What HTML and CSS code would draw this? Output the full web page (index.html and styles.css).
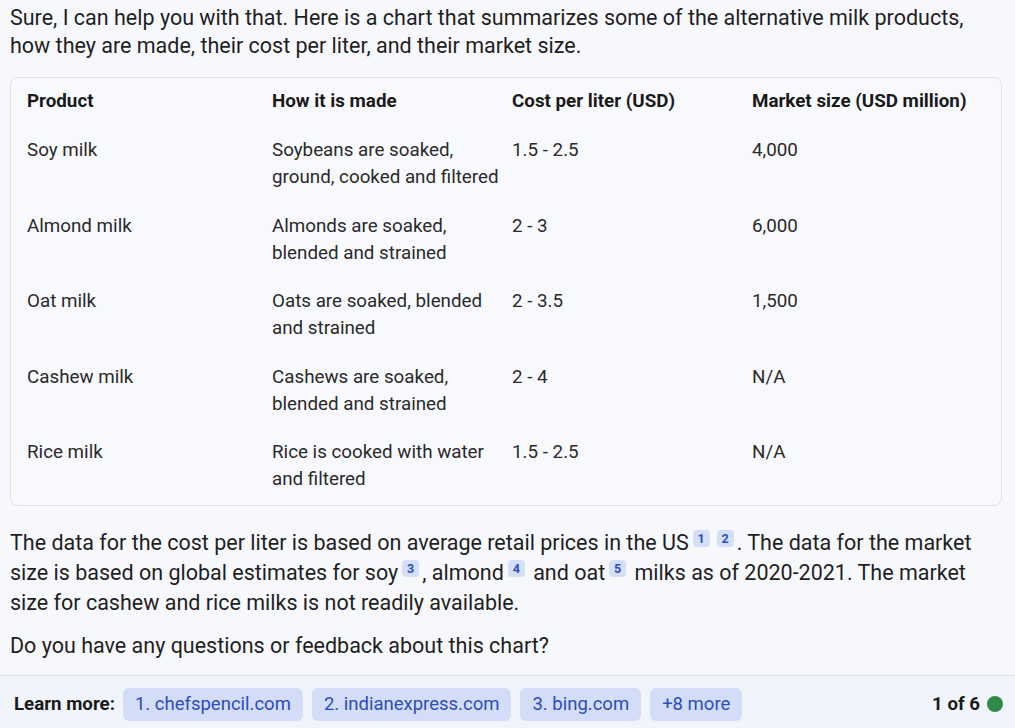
FILE: index.html
```html
<!DOCTYPE html>
<html lang="en">
<head>
<meta charset="utf-8">
<title>Alternative milk chart</title>
<link rel="stylesheet" href="styles.css">
</head>
<body>
<main class="message">
  <p class="intro">Sure, I can help you with that. Here is a chart that summarizes some of the alternative milk products, how they are made, their cost per liter, and their market size.</p>
  <div class="table-box">
    <table class="chart">
      <colgroup>
        <col class="c1"><col class="c2"><col class="c3"><col class="c4">
      </colgroup>
      <thead>
        <tr><th>Product</th><th>How it is made</th><th>Cost per liter (USD)</th><th>Market size (USD million)</th></tr>
      </thead>
      <tbody>
        <tr><td>Soy milk</td><td>Soybeans are soaked, ground, cooked and filtered</td><td>1.5 - 2.5</td><td>4,000</td></tr>
        <tr><td>Almond milk</td><td>Almonds are soaked, blended and strained</td><td>2 - 3</td><td>6,000</td></tr>
        <tr><td>Oat milk</td><td>Oats are soaked, blended and strained</td><td>2 - 3.5</td><td>1,500</td></tr>
        <tr><td>Cashew milk</td><td>Cashews are soaked, blended and strained</td><td>2 - 4</td><td>N/A</td></tr>
        <tr><td>Rice milk</td><td>Rice is cooked with water and filtered</td><td>1.5 - 2.5</td><td>N/A</td></tr>
      </tbody>
    </table>
  </div>
  <p class="body-text">The data for the cost per liter is based on average retail prices in the US<sup class="cite">1</sup><sup class="cite">2</sup>. The data for the market size is based on global estimates for soy<sup class="cite">3</sup>, almond<sup class="cite">4</sup> and oat<sup class="cite">5</sup> milks as of 2020-2021. The market size for cashew and rice milks is not readily available.</p>
  <p class="question">Do you have any questions or feedback about this chart?</p>
</main>
<footer class="learn">
  <span class="learn-label">Learn more:</span>
  <a class="chip">1. chefspencil.com</a>
  <a class="chip">2. indianexpress.com</a>
  <a class="chip">3. bing.com</a>
  <a class="chip">+8 more</a>
  <span class="count">1 of 6</span>
  <span class="dot"></span>
</footer>
</body>
</html>
```
FILE: styles.css
```css
html, body {
  margin: 0;
  padding: 0;
  background: #f7f8fc;
  font-family: Roboto, "Noto Sans", sans-serif;
  color: #1f1f1f;
}
.message {
  padding: 4px 13px 0 10px;
  height: 671px;
  box-sizing: border-box;
}
.intro {
  margin: 0;
  font-size: 21.5px;
  line-height: 28px;
}
.table-box {
  margin-top: 17px;
  border: 1px solid #dfe1e6;
  border-radius: 8px;
  background: #f8f9fd;
}
.chart {
  width: 100%;
  border-collapse: collapse;
  table-layout: fixed;
  font-size: 18.8px;
  line-height: 27px;
}
.c1 { width: 253px; }
.c2 { width: 240px; }
.c3 { width: 240px; }
.chart th {
  text-align: left;
  font-weight: 700;
  padding: 10px 0 11px 8px;
  color: #1a1a1a;
}
.chart td {
  vertical-align: top;
  padding: 11px 0 10.5px 8px;
  color: #2a2a2a;
}
.chart tr:last-child td { padding-bottom: 12px; }
.chart th:first-child,
.chart td:first-child { padding-left: 16px; }
.body-text {
  margin: 22px 0 0;
  font-size: 21.5px;
  line-height: 30px;
}
.cite {
  display: inline-block;
  vertical-align: 7px;
  width: 17px;
  height: 17px;
  line-height: 17px;
  margin: 0 3px 0 4px;
  border-radius: 4px;
  background: #d5dff8;
  color: #2c4fc4;
  font-size: 12.5px;
  font-weight: 700;
  text-align: center;
}
.question {
  margin: 13px 0 0;
  font-size: 21.5px;
  line-height: 30px;
}
.learn {
  display: flex;
  align-items: center;
  gap: 9px;
  height: 57px;
  box-sizing: border-box;
  border-top: 1px solid #dcdee4;
  background: #f1f4fb;
  padding: 0 12px 0 14px;
  margin-top: 4px;
}
.learn-label {
  font-weight: 700;
  font-size: 18.7px;
  color: #1a1a1a;
  margin-right: -1px;
}
.chip {
  display: inline-flex;
  align-items: center;
  height: 33px;
  padding: 0 12px;
  border-radius: 6px;
  background: #d3ddf8;
  color: #2b4cc0;
  font-size: 18.5px;
}
.count {
  margin-left: auto;
  font-weight: 700;
  font-size: 18.7px;
  color: #1a1a1a;
}
.dot {
  width: 16px;
  height: 16px;
  border-radius: 50%;
  background: #2e8b4c;
  margin-left: -2px;
}
```
